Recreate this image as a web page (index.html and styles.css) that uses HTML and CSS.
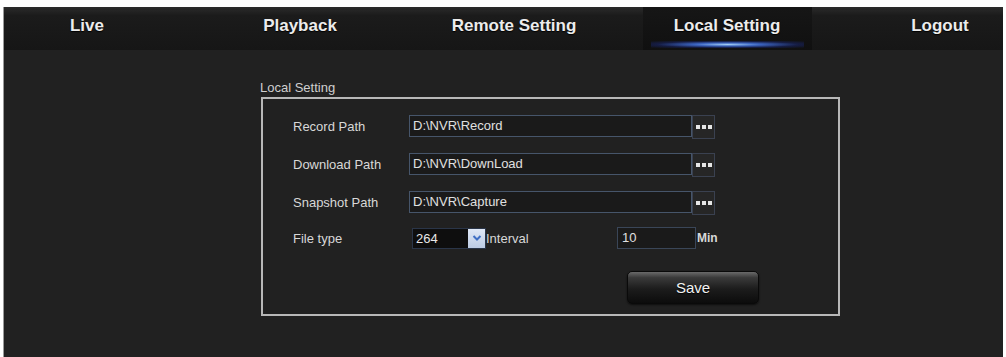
FILE: index.html
```html
<!DOCTYPE html>
<html lang="en">
<head>
    <meta charset="UTF-8">
    <title>Local Setting</title>
    <link rel="stylesheet" href="styles.css">
</head>
<body>
    <div class="panel">
        <div class="nav">
            <a class="nav-item">Live</a>
            <a class="nav-item">Playback</a>
            <a class="nav-item">Remote Setting</a>
            <a class="nav-item active"><span class="tab">Local Setting</span></a>
            <a class="nav-item logout">Logout</a>
        </div>

        <div class="content">
            <div class="section-title">Local Setting</div>
            <div class="setting-box">
                <div class="row">
                    <label>Record Path</label>
                    <div class="path-input">D:\NVR\Record</div>
                    <button class="browse"><span></span><span></span><span></span></button>
                </div>
                <div class="row">
                    <label>Download Path</label>
                    <div class="path-input">D:\NVR\DownLoad</div>
                    <button class="browse"><span></span><span></span><span></span></button>
                </div>
                <div class="row">
                    <label>Snapshot Path</label>
                    <div class="path-input">D:\NVR\Capture</div>
                    <button class="browse"><span></span><span></span><span></span></button>
                </div>
                <div class="row file-row">
                    <label>File type</label>
                    <div class="file-controls">
                        <div class="select">
                            <span class="select-value">264</span>
                            <span class="select-arrow">
                                <svg width="10" height="8" viewBox="0 0 10 8"><path d="M1.5 2 L5 5.5 L8.5 2" fill="none" stroke="#3f6fc4" stroke-width="2"/></svg>
                            </span>
                        </div>
                        <span class="interval-label">Interval</span>
                        <div class="interval-input">10</div>
                        <span class="unit">Min</span>
                    </div>
                </div>
                <div class="actions">
                    <button class="save">Save</button>
                </div>
            </div>
        </div>
    </div>
</body>
</html>
```

FILE: styles.css
```css
* {
    margin: 0;
    padding: 0;
    box-sizing: border-box;
}

body {
    background-color: #ffffff;
    font-family: 'Liberation Sans', Arial, sans-serif;
    padding: 7px 0 0 3px;
    overflow: hidden;
}

.panel {
    width: 1000px;
    min-height: 360px;
    background-color: #212121;
    border-left: 1px solid #9a9a9a;
}

/* top navigation */
.nav {
    display: grid;
    grid-template-columns: 166px 260px 168px 258px 148px;
    height: 43px;
    background: linear-gradient(#2b2b2b 0%, #1b1b1b 20%, #161616 100%);
}

.nav-item {
    display: flex;
    justify-content: center;
    align-items: center;
    color: #ececec;
    font-size: 17px;
    font-weight: bold;
    text-shadow: 0 1px 1px #000;
    padding-bottom: 5px;
    cursor: pointer;
}

.nav-item.logout {
    padding-left: 20px;
}

.nav-item.active {
    padding-bottom: 0;
}

.tab {
    position: relative;
    width: 169px;
    height: 100%;
    display: flex;
    justify-content: center;
    align-items: center;
    padding-bottom: 5px;
    background: linear-gradient(#161616, #101010);
}

.tab::after {
    content: "";
    position: absolute;
    left: 8px;
    right: 8px;
    bottom: 2px;
    height: 7px;
    background: radial-gradient(ellipse at center, rgba(170, 215, 255, 0.95) 0%, rgba(70, 120, 235, 0.8) 30%, rgba(30, 50, 160, 0.35) 65%, rgba(0, 0, 0, 0) 100%);
}

/* content */
.content {
    padding: 30px 0 0 257px;
}

.section-title {
    color: #cfcfcf;
    font-size: 13px;
    line-height: 16px;
    height: 17px;
    margin-left: -1px;
}

.setting-box {
    width: 579px;
    height: 219px;
    border: 2px solid #b8b8b8;
    padding: 14px 0 0 30px;
}

.row {
    display: grid;
    grid-template-columns: 116px 283px 23px;
    align-items: center;
    height: 22px;
    margin-bottom: 16px;
}

.row label {
    color: #d8d8d8;
    font-size: 13px;
}

.path-input {
    height: 22px;
    border: 1px solid #46556a;
    background-color: #1a1a1a;
    color: #e0e0e0;
    font-size: 13px;
    line-height: 20px;
    padding-left: 3px;
}

.browse {
    height: 24px;
    border: 1px solid #3a4150;
    background-color: #262626;
    display: flex;
    justify-content: center;
    align-items: center;
    gap: 2px;
    margin-top: 2px;
}

.browse span {
    width: 4px;
    height: 4px;
    background-color: #e6e6e6;
}

.file-row {
    grid-template-columns: 119px auto;
    height: 21px;
}

.file-controls {
    display: flex;
    align-items: center;
}

.select {
    display: flex;
    width: 74px;
    height: 21px;
    border: 1px solid #2a3548;
    background-color: #0e0e0e;
}

.select-value {
    flex: 1;
    color: #e8e8e8;
    font-size: 13px;
    line-height: 19px;
    padding-left: 3px;
}

.select-arrow {
    width: 17px;
    background: linear-gradient(#dfe8f6, #bccbe4);
    display: flex;
    justify-content: center;
    align-items: center;
}

.interval-label {
    color: #d8d8d8;
    font-size: 13px;
    width: 131px;
}

.interval-input {
    width: 79px;
    height: 22px;
    border: 1px solid #3a4658;
    background-color: #1a1a1a;
    color: #e0e0e0;
    font-size: 13px;
    line-height: 20px;
    padding-left: 4px;
}

.unit {
    color: #d8d8d8;
    font-size: 12px;
    font-weight: bold;
    padding-left: 1px;
}

.actions {
    padding: 7px 0 0 334px;
}

.save {
    width: 132px;
    height: 33px;
    border: 1px solid #0a0a0a;
    border-radius: 5px;
    background: linear-gradient(#6a6a6a 0%, #3a3a3a 18%, #1c1c1c 55%, #0c0c0c 100%);
    color: #f2f2f2;
    font-family: 'Liberation Sans', Arial, sans-serif;
    font-size: 15px;
    text-shadow: 0 1px 1px #000;
    box-shadow: 0 1px 2px rgba(0, 0, 0, 0.6);
}
```
